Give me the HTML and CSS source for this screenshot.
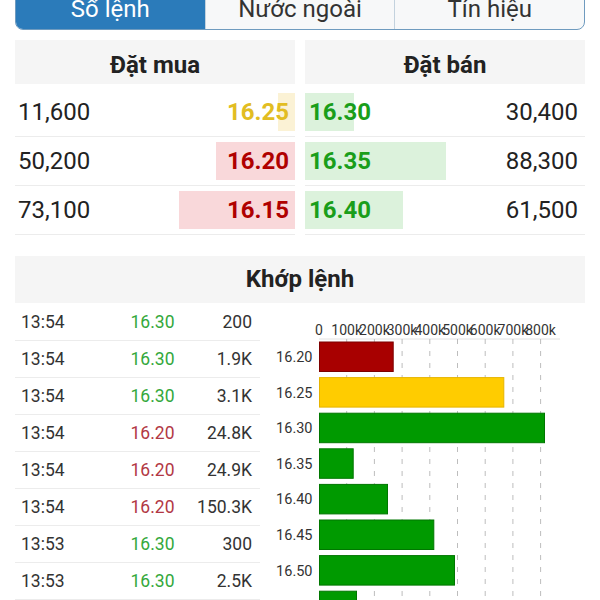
FILE: index.html
```html
<!DOCTYPE html>
<html lang="vi">
<head>
  <meta charset="UTF-8" />
  <meta name="viewport" content="width=device-width, initial-scale=1" />
  <title>Sổ lệnh</title>
  <link rel="stylesheet" href="styles.css">
</head>
<body>
  <nav class="tabs">
    <button class="tab active">Sổ lệnh</button>
    <button class="tab">Nước ngoài</button>
    <button class="tab">Tín hiệu</button>
  </nav>

  <section class="book">
    <div class="side buy">
      <h3 class="side-title">Đặt mua</h3>
      <div class="level ref" style="--w: 17px"><span class="vol">11,600</span><span class="px">16.25</span></div>
      <div class="level down" style="--w: 79px"><span class="vol">50,200</span><span class="px">16.20</span></div>
      <div class="level down" style="--w: 116px"><span class="vol">73,100</span><span class="px">16.15</span></div>
    </div>
    <div class="side sell">
      <h3 class="side-title">Đặt bán</h3>
      <div class="level up" style="--w: 49px"><span class="px">16.30</span><span class="vol">30,400</span></div>
      <div class="level up" style="--w: 141px"><span class="px">16.35</span><span class="vol">88,300</span></div>
      <div class="level up" style="--w: 98px"><span class="px">16.40</span><span class="vol">61,500</span></div>
    </div>
  </section>

  <section class="match">
    <h3 class="match-title">Khớp lệnh</h3>
    <div class="match-body">
      <div class="trades">
        <div class="trade"><span>13:54</span><span class="up">16.30</span><span>200</span></div>
        <div class="trade"><span>13:54</span><span class="up">16.30</span><span>1.9K</span></div>
        <div class="trade"><span>13:54</span><span class="up">16.30</span><span>3.1K</span></div>
        <div class="trade"><span>13:54</span><span class="down">16.20</span><span>24.8K</span></div>
        <div class="trade"><span>13:54</span><span class="down">16.20</span><span>24.9K</span></div>
        <div class="trade"><span>13:54</span><span class="down">16.20</span><span>150.3K</span></div>
        <div class="trade"><span>13:53</span><span class="up">16.30</span><span>300</span></div>
        <div class="trade"><span>13:53</span><span class="up">16.30</span><span>2.5K</span></div>
      </div>

      <!-- volume by price: 100k = 27.7px -->
      <svg class="chart" width="325" height="330" viewBox="0 0 325 330">
        <line class="axis" x1="59" y1="36" x2="300" y2="36" />
        <g class="grid">
          <line x1="86.7" y1="36" x2="86.7" y2="330" />
          <line x1="114.4" y1="36" x2="114.4" y2="330" />
          <line x1="142.1" y1="36" x2="142.1" y2="330" />
          <line x1="169.8" y1="36" x2="169.8" y2="330" />
          <line x1="197.5" y1="36" x2="197.5" y2="330" />
          <line x1="225.2" y1="36" x2="225.2" y2="330" />
          <line x1="252.9" y1="36" x2="252.9" y2="330" />
          <line x1="280.6" y1="36" x2="280.6" y2="330" />
        </g>
        <g class="xlabels">
          <text x="59" y="32">0</text>
          <text x="86.7" y="32">100k</text>
          <text x="114.4" y="32">200k</text>
          <text x="142.1" y="32">300k</text>
          <text x="169.8" y="32">400k</text>
          <text x="197.5" y="32">500k</text>
          <text x="225.2" y="32">600k</text>
          <text x="252.9" y="32">700k</text>
          <text x="280.6" y="32">800k</text>
        </g>
        <g class="bars">
          <rect class="down" x="59.5" y="39" width="73.7" height="29.5" />
          <rect class="ref" x="59.5" y="74.6" width="184.3" height="29.5" />
          <rect class="up" x="59.5" y="110.2" width="225" height="29.5" />
          <rect class="up" x="59.5" y="145.8" width="33.7" height="29.5" />
          <rect class="up" x="59.5" y="181.4" width="68" height="29.5" />
          <rect class="up" x="59.5" y="217" width="114.3" height="29.5" />
          <rect class="up" x="59.5" y="252.6" width="135" height="29.5" />
          <rect class="up" x="59.5" y="288.2" width="37" height="29.5" />
        </g>
        <g class="ylabels">
          <text x="52.5" y="58.9">16.20</text>
          <text x="52.5" y="94.5">16.25</text>
          <text x="52.5" y="130.1">16.30</text>
          <text x="52.5" y="165.7">16.35</text>
          <text x="52.5" y="201.3">16.40</text>
          <text x="52.5" y="236.9">16.45</text>
          <text x="52.5" y="272.5">16.50</text>
          <text x="52.5" y="308.1">16.55</text>
        </g>
      </svg>
    </div>
  </section>
</body>
</html>
```

FILE: styles.css
```css
:root {
  --blue: #2b7bba;
  --tab-border: #6f9bbf;
  --box: #f5f5f5;
  --line: #ececec;
  --text: #222;
  --up: #1a9e1a;
  --down: #b00000;
  --ref: #e2bd22;
}

* {
  margin: 0;
  padding: 0;
  box-sizing: border-box;
}

html, body {
  overflow: hidden;
}

body {
  font-family: Roboto, "Noto Sans", sans-serif;
  background: #fff;
  color: var(--text);
  padding: 0 15px;
  width: 600px;
}

/* top tabs */
.tabs {
  display: flex;
  height: 40px;
  margin-top: -10px;
  border: 1px solid var(--tab-border);
  border-radius: 0 0 8px 8px;
  overflow: hidden;
  background: #f7f8f9;
}

.tab {
  flex: 1;
  border: none;
  border-left: 1px solid #c3d2de;
  background: transparent;
  font-family: inherit;
  font-size: 24px;
  color: #333;
  padding-bottom: 3px;
}

.tab:first-child {
  border-left: none;
}

.tab.active {
  background: var(--blue);
  color: #fff;
}

/* order book */
.book {
  display: flex;
  gap: 10px;
  margin-top: 10px;
}

.side {
  flex: 1;
}

.side-title {
  background: var(--box);
  height: 44px;
  padding-top: 7px;
  line-height: 37px;
  text-align: center;
  font-size: 24px;
  font-weight: 700;
  margin-bottom: 4px;
}

.level {
  display: flex;
  justify-content: space-between;
  align-items: center;
  height: 49px;
  border-bottom: 1px solid var(--line);
  font-size: 24px;
  background-image: linear-gradient(var(--bar), var(--bar));
  background-repeat: no-repeat;
  background-size: var(--w) 38px;
}

.buy .level {
  background-position: right center;
  padding: 0 6px 0 3px;
}

.sell .level {
  background-position: left center;
  padding: 0 7px 0 4px;
}

.level .px {
  font-weight: 700;
}

.level.ref { --bar: #fbf2d5; }
.level.down { --bar: #f9d8da; }
.level.up { --bar: #dcf2dc; }

.level.ref .px { color: var(--ref); }
.level.down .px { color: var(--down); }
.level.up .px { color: var(--up); }

/* matched trades */
.match {
  margin-top: 21px;
}

.match-title {
  background: var(--box);
  height: 47px;
  line-height: 47px;
  text-align: center;
  font-size: 24px;
  font-weight: 700;
}

.match-body {
  display: flex;
}

.trades {
  width: 245px;
  flex-shrink: 0;
  padding-top: 1px;
}

.trade {
  display: grid;
  grid-template-columns: 95px 73px 1fr;
  align-items: center;
  height: 37px;
  padding: 0 8px 0 6px;
  border-bottom: 1px solid var(--line);
  font-size: 17.5px;
  color: #333;
}

.trade span:nth-child(2) {
  text-align: center;
}

.trade span:nth-child(3) {
  text-align: right;
}

.trade .up { color: #34a83c; }
.trade .down { color: #b23844; }

/* chart */
.chart {
  flex-shrink: 0;
  font-family: Roboto, "Noto Sans", sans-serif;
}

.chart .axis {
  stroke: #e2e2e2;
  stroke-width: 1;
}

.chart .grid line {
  stroke: #bdbdbd;
  stroke-width: 1;
  stroke-dasharray: 5 7;
}

.chart text {
  fill: #333;
}

.chart .xlabels text {
  font-size: 14px;
  text-anchor: middle;
}

.chart .ylabels text {
  font-size: 14.5px;
  text-anchor: end;
}

.chart .bars rect {
  stroke-width: 1;
}

.chart rect.down { fill: #a80000; stroke: #7d0000; }
.chart rect.ref { fill: #ffcc00; stroke: #e6b400; }
.chart rect.up { fill: #009a00; stroke: #007700; }
```
